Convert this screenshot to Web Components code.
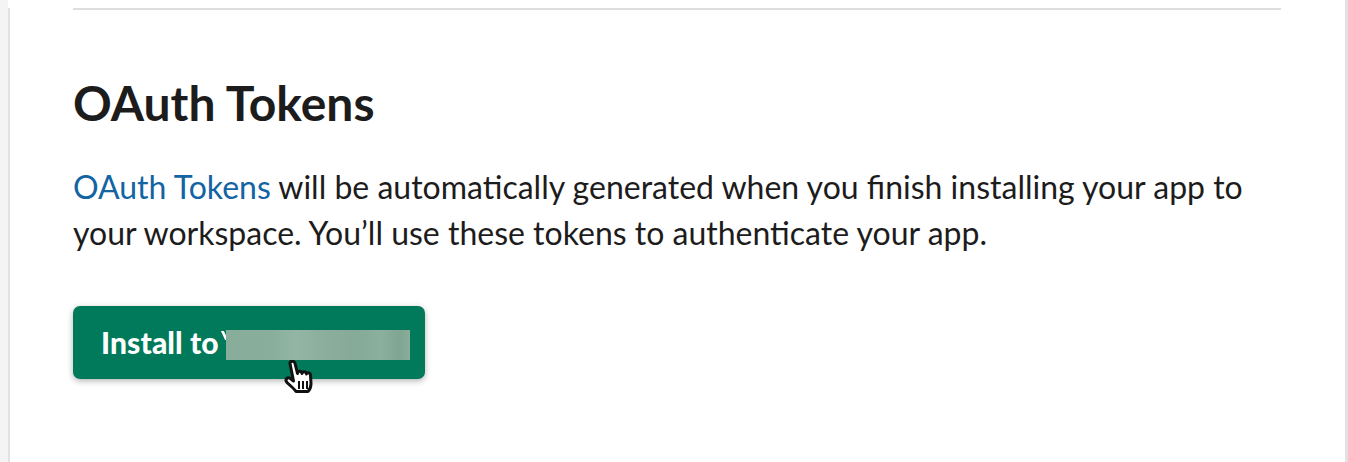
<!DOCTYPE html>
<html><head><meta charset="utf-8"><style>
html,body{margin:0;padding:0;height:462px;overflow:hidden;background:#fff}
body{background:linear-gradient(90deg,#f4f4f4 0 8px,#fff 8px 1345px,#e2e2e2 1345px)}
oauth-card a{color:#1264a3;text-decoration:none}
</style></head>
<body>
<oauth-card>
  <span slot="title">OAuth Tokens</span>
  <span slot="body"><a>OAuth Tokens</a> will be automatically generated when you finish installing your app to your workspace. You’ll use these tokens to authenticate your app.</span>
  <span slot="action">Install to</span>
</oauth-card>
<script>
class InstallButton extends HTMLElement{constructor(){super();this.attachShadow({mode:'open'}).innerHTML=`<style>
:host{display:block;width:352px;height:73px;position:relative;background:#007a5a;border-radius:7px;box-shadow:0 2px 6px rgba(0,0,0,.3);color:#fff;font:900 30px/72px Lato,sans-serif;letter-spacing:.1px;box-sizing:border-box;padding-left:28px}
.blur{position:absolute;left:153px;top:24px;width:184px;height:30px;background:linear-gradient(90deg,#88ad9a 0%,#8aae9c 25%,#93b5a5 38%,#8aae9b 55%,#86aa97 70%,#8caf9e 85%,#7ea692 94%,#89ad9b 100%)}
.sliver{position:absolute;left:150px;top:25px;width:3px;height:9px;background:#fff;transform:skewX(25deg)}
svg{position:absolute;left:210px;top:52px;width:36px;height:40px;overflow:visible;filter:blur(.35px)}
</style><slot></slot><div class="sliver"></div>
<svg viewBox="0 0 34 40"><path d="M6 5.500c0-3 4.500-3 5 0l2.500 10c0-3 4-3 4.500 0 .5-2.500 4-2.500 4.500.5.500-2 4-1.500 4 1.500l.5 8c0 4-1 6-3 8H12c-2-3-6-6-9-9-2.500-3 .5-6 3.500-4l3 2.500z" fill="#fff" stroke="#111" stroke-width="3" stroke-linejoin="round"/><path d="M15 23v8M19 23v8M23 23v8" stroke="#111" stroke-width="2"/></svg><div class="blur"></div>`}}
customElements.define('install-button',InstallButton);
class OauthCard extends HTMLElement{constructor(){super();this.attachShadow({mode:'open'}).innerHTML=`<style>
:host{display:block;box-sizing:border-box;margin-left:8px;width:1337px;height:462px;background:#fff;border-left:2px solid #e2e2e2;padding:0 64px 0 63px;font-family:Lato,sans-serif;color:#1d1c1d}
.rule{height:2px;background:#ddd;margin-top:8px}
h2{margin:0;padding-top:63px;font:700 48px/60px Lato,sans-serif}
p{margin:0;padding-top:31px;font:400 32px/46px Lato,sans-serif;max-width:1190px}
.act{padding-top:50px}
</style><div class="rule"></div><h2><slot name="title"></slot></h2><p><slot name="body"></slot></p><div class="act"><install-button><slot name="action"></slot></install-button></div>`}}
customElements.define('oauth-card',OauthCard);
</script>
</body></html>
